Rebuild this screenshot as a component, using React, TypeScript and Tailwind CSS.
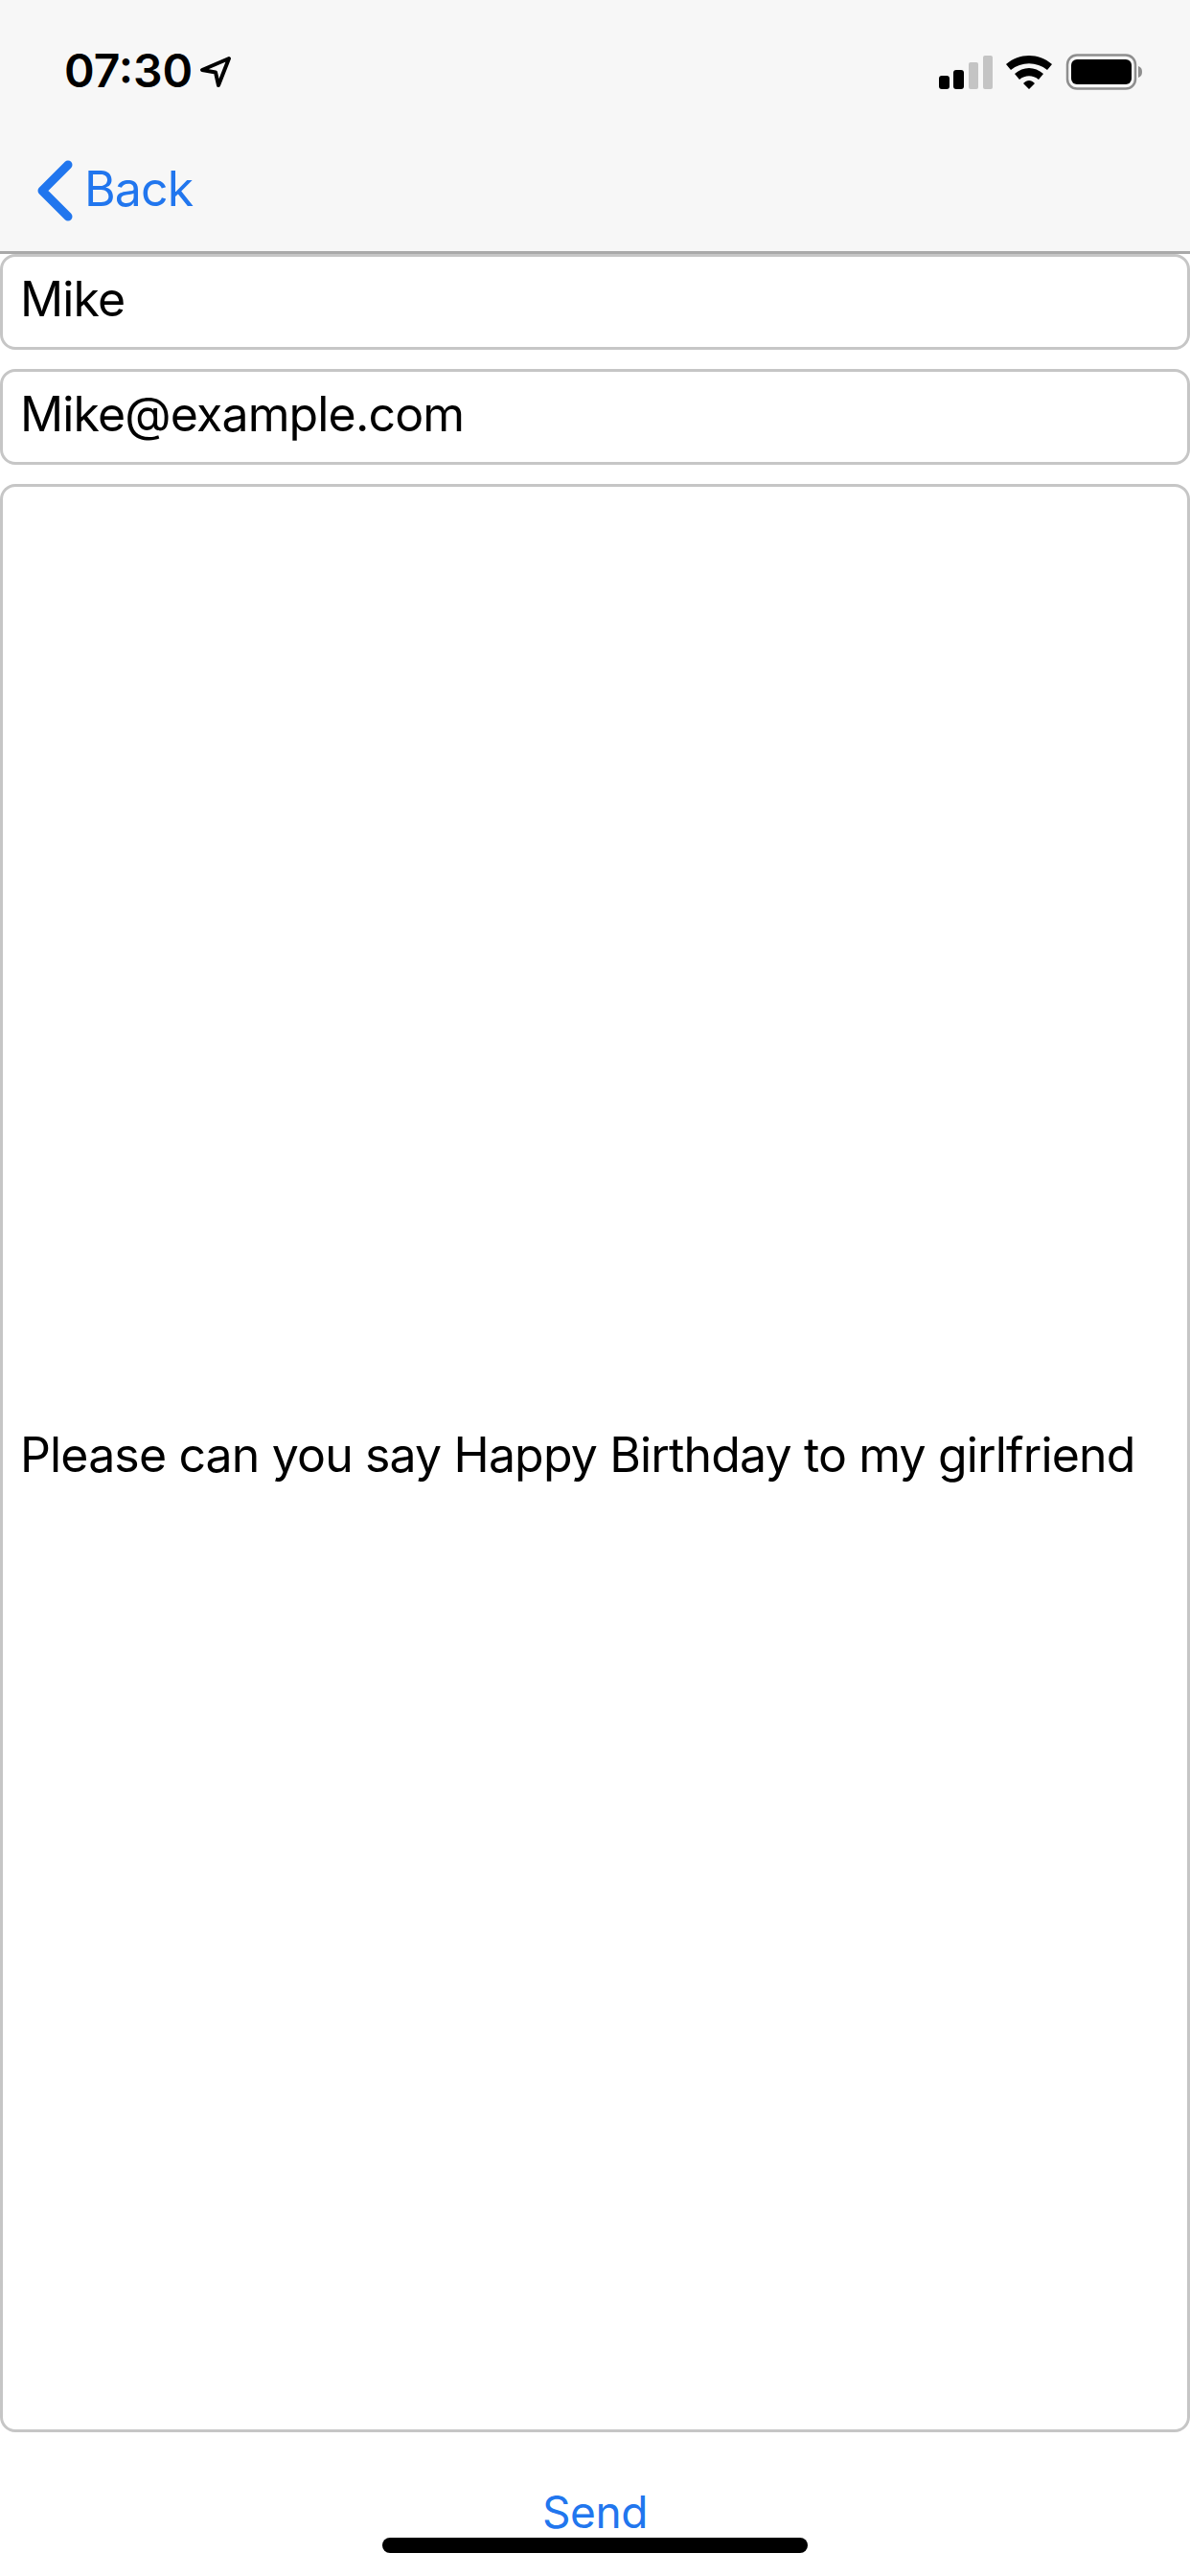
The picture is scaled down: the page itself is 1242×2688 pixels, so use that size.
const Field = ({ value }: { value: string }) => (
  <div className="h-[100px] shrink-0 flex items-center pl-[18px] pb-[6px] bg-white border-[3px] border-[#c6c6c6] rounded-[16px]">
    {value}
  </div>
);

const LocationArrow = () => (
  <svg width="34" height="34" viewBox="0 0 34 34" className="ml-[7px] mt-[1px]">
    <path
      d="M31 3 L3 15 L17 17.5 L20 31 Z"
      fill="none"
      stroke="#000"
      strokeWidth="4"
      strokeLinejoin="round"
    />
  </svg>
);

const StatusIcons = () => (
  <svg width="214" height="40" viewBox="0 0 214 40" className="mr-[48px] mt-[3px]">
    <rect x="0" y="23" width="11" height="14" rx="3" fill="#000" />
    <rect x="15" y="17" width="11" height="20" rx="3" fill="#000" />
    <rect x="31" y="9" width="10" height="28" rx="2" fill="#c4c4c4" />
    <rect x="46" y="2" width="10" height="35" rx="2" fill="#c4c4c4" />
    <path
      d="M70 11 C84 -1 104 -1 118 11 L113 17 C102 8 86 8 75 17 Z M79 21 C88 13 100 13 109 21 L104 27 C98 22 90 22 84 27 Z M88 31 C92 27 96 27 100 31 L94 37 Z"
      fill="#000"
    />
    <rect x="134" y="1.5" width="71" height="35" rx="10" fill="none" stroke="#8e8e8e" strokeWidth="2.5" />
    <rect x="138" y="6" width="63" height="26" rx="6" fill="#000" />
    <path d="M208 13 C211 14 212 16 212 19 C212 22 211 24 208 25 Z" fill="#8e8e8e" />
  </svg>
);

export default function App() {
  return (
    <div
      className="relative w-[1242px] h-[2688px] flex flex-col bg-white text-[50px] text-black tracking-[-0.85px] overflow-hidden"
      style={{ fontFamily: 'Inter, "Liberation Sans", sans-serif' }}
    >
      <header className="h-[265px] shrink-0 flex flex-col bg-[#f7f7f7] border-b-[3px] border-[#a9a9a9]">
        <div className="h-[148px] shrink-0 flex items-center justify-between pl-[67px]">
          <div className="flex items-center text-[48px] font-semibold tracking-normal">
            07:30
            <LocationArrow />
          </div>
          <StatusIcons />
        </div>
        <div className="flex items-center pl-[38px] pt-[12px] text-[#2176ee]">
          <svg width="38" height="64" viewBox="0 0 38 64" className="mr-[12px] mt-[2px]">
            <path
              d="M33 5 L6 32 L33 59"
              fill="none"
              stroke="#2176ee"
              strokeWidth="9"
              strokeLinecap="round"
              strokeLinejoin="round"
            />
          </svg>
          Back
        </div>
      </header>

      <main className="flex-1 flex flex-col gap-[20px]">
        <Field value="Mike" />
        <Field value="Mike@example.com" />
        <div className="h-[2033px] shrink-0 flex items-center pl-[18px] pb-[6px] bg-white border-[3px] border-[#c6c6c6] rounded-[16px]">
          Please can you say Happy Birthday to my girlfriend
        </div>
        <div className="text-center text-[46px] tracking-[-0.4px] text-[#2176ee] mt-[28px] leading-[70px]">Send</div>
      </main>

      <div className="absolute left-[399px] top-[2648px] w-[444px] h-[16px] rounded-full bg-black" />
    </div>
  );
}
